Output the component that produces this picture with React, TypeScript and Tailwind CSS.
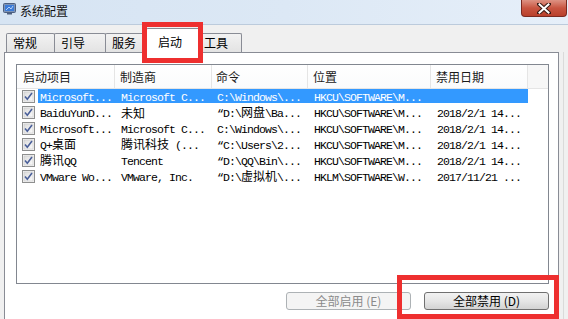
import React from "react";

const CJK = /[\u3000-\u9fff\uff00-\uffef]/;

function Mixed({ text }: { text: string }) {
  const parts = text.match(/[\u3000-\u9fff\uff00-\uffef]+|[^\u3000-\u9fff\uff00-\uffef]+/g) || [];
  return (
    <>
      {parts.map((p, i) =>
        CJK.test(p) ? (
          <span key={i} className="font-['Noto_Sans_CJK_SC',sans-serif] text-[12px] tracking-normal">
            {p}
          </span>
        ) : (
          <span key={i} className="font-['Liberation_Mono',monospace] text-[11.5px] tracking-[-0.9px] whitespace-pre">
            {p}
          </span>
        )
      )}
    </>
  );
}

function CheckBox() {
  return (
    <svg width="13" height="13" viewBox="0 0 13 13" className="shrink-0">
      <defs>
        <linearGradient id="cbg" x1="0" y1="0" x2="1" y2="1">
          <stop offset="0" stopColor="#dcdcdc" />
          <stop offset="1" stopColor="#fbfbfb" />
        </linearGradient>
      </defs>
      <rect x="0.5" y="0.5" width="12" height="12" fill="#f4f4f4" stroke="#8e8f8f" />
      <rect x="2" y="2" width="9" height="9" fill="url(#cbg)" stroke="#c8c8c8" strokeWidth="0.6" />
      <path d="M3 6.5 L5.3 9.2 L10 3" fill="none" stroke="#4a5f99" strokeWidth="1.6" />
    </svg>
  );
}

const rows = [
  ["Microsoft...", "Microsoft C...", "C:\\Windows\\...", "HKCU\\SOFTWARE\\M...", ""],
  ["BaiduYunD...", "未知", "“D:\\网盘\\Ba...", "HKCU\\SOFTWARE\\M...", "2018/2/1 14..."],
  ["Microsoft...", "Microsoft C...", "C:\\Windows\\...", "HKCU\\SOFTWARE\\M...", "2018/2/1 14..."],
  ["Q+桌面", "腾讯科技 (...", "“C:\\Users\\2...", "HKCU\\SOFTWARE\\M...", "2018/2/1 14..."],
  ["腾讯QQ", "Tencent", "“D:\\QQ\\Bin\\...", "HKCU\\SOFTWARE\\M...", "2018/2/1 14..."],
  ["VMware Wo...", "VMware, Inc.", "“D:\\虚拟机\\...", "HKLM\\SOFTWARE\\W...", "2017/11/21 ..."],
];

function Tab({ label, w, selected }: { label: string; w: string; selected?: boolean }) {
  if (selected) {
    return (
      <div
        className={`${w} h-[25px] -mb-px -ml-[2px] -mr-[2px] relative z-10 bg-white border border-b-0 border-[#898c95] rounded-t-[2px] flex items-start pt-[4px] pl-[11px] text-[12px] text-black`}
      >
        {label}
      </div>
    );
  }
  return (
    <div
      className={`${w} h-[19px] border border-b-0 border-[#898c95] -ml-px first:ml-0 rounded-t-[2px] bg-gradient-to-b from-[#f2f2f2] to-[#e3e3e3] flex items-center pl-[6px] text-[12px] text-black`}
    >
      {label}
    </div>
  );
}

export default function App() {
  return (
    <div className="w-[568px] h-[319px] overflow-hidden relative bg-[#f0f0f0] font-['Noto_Sans_CJK_SC',sans-serif]">
      {/* title bar */}
      <div className="h-[25px] flex items-start bg-gradient-to-r from-[#d6e4f3] via-[#dce8f5] to-[#e6eff9] border-b border-[#bccbdc]">
        <div className="pl-[3px] pt-[3px]">
          <svg width="13" height="12" viewBox="0 0 13 12">
            <rect x="0.5" y="0.5" width="12" height="9" rx="1" fill="#7d93b5" stroke="#4c5f80" />
            <rect x="2" y="2" width="9" height="6" fill="#3b7bd8" />
            <path d="M3 7 L6 4 L8 6 L10 3" stroke="#cfe4ff" strokeWidth="0.8" fill="none" />
            <rect x="4" y="10" width="5" height="1.5" fill="#4c5f80" />
          </svg>
        </div>
        <div className="ml-[4px] mt-[3px] text-[12px] leading-[16px] text-[#111]">系统配置</div>
        <div className="ml-auto mr-[1px] w-[46px] h-[17px] rounded-b-[4px] border border-t-0 border-[#7a2a20] bg-gradient-to-b from-[#dd9283] via-[#c85541] to-[#b9402b] flex items-center justify-center">
          <svg width="14" height="11" viewBox="0 0 14 11">
            <path d="M2 1 L12 10 M12 1 L2 10" stroke="#3a1a14" strokeWidth="4" strokeLinecap="square" />
            <path d="M2.5 1.5 L11.5 9.5 M11.5 1.5 L2.5 9.5" stroke="#ffffff" strokeWidth="2" strokeLinecap="square" />
          </svg>
        </div>
      </div>

      {/* tabs */}
      <div className="h-[27px] flex items-end pl-[6px]">
        <Tab label="常规" w="w-[49px]" />
        <Tab label="引导" w="w-[52px]" />
        <Tab label="服务" w="w-[43px]" />
        <Tab label="启动" w="w-[54px]" selected />
        <Tab label="工具" w="w-[45px]" />
      </div>

      {/* panel + right frame */}
      <div className="flex">
        <div className="ml-[4px] w-[555px] h-[268px] border border-[#898c95] bg-white flex flex-col">
          {/* list view */}
          <div className="mt-[11px] ml-[11px] w-[533px] h-[220px] border border-[#828790] bg-white flex flex-col">
            <div className="h-[24px] flex border-b border-[#e5e5e5] text-[12px] text-[#1a1a1a] bg-gradient-to-b from-white to-[#fafbfc]">
              <div className="w-[98px] border-r border-[#e5e5e5] pl-[6px] flex items-center">启动项目</div>
              <div className="w-[97px] border-r border-[#e5e5e5] pl-[5px] flex items-center">制造商</div>
              <div className="w-[96px] border-r border-[#e5e5e5] pl-[4px] flex items-center">命令</div>
              <div className="w-[123px] border-r border-[#e5e5e5] pl-[5px] flex items-center">位置</div>
              <div className="w-[97px] border-r border-[#e5e5e5] pl-[5px] flex items-center">禁用日期</div>
              <div className="flex-1 bg-[#f7f7f7]" />
            </div>
            {rows.map((r, i) => {
              const sel = i === 0;
              return (
                <div key={i} className="h-[16px] flex items-start">
                  <div className="w-[21px] pl-[5px] pt-[1px] flex">
                    <CheckBox />
                  </div>
                  <div
                    className={`h-[14px] flex items-center leading-[14px] ${
                      sel ? "bg-[#3399ff] text-white" : "text-black"
                    }`}
                  >
                    <div className="w-[78px] pl-[2px] overflow-hidden whitespace-nowrap">
                      <Mixed text={r[0]} />
                    </div>
                    <div className="w-[97px] pl-[5px] overflow-hidden whitespace-nowrap">
                      <Mixed text={r[1]} />
                    </div>
                    <div className="w-[96px] pl-[4px] overflow-hidden whitespace-nowrap">
                      <Mixed text={r[2]} />
                    </div>
                    <div className="w-[123px] pl-[5px] overflow-hidden whitespace-nowrap">
                      <Mixed text={r[3]} />
                    </div>
                    <div className="w-[96px] pl-[5px] overflow-hidden whitespace-nowrap">
                      <Mixed text={r[4]} />
                    </div>
                  </div>
                </div>
              );
            })}
          </div>

          {/* buttons */}
          <div className="mt-[8px] flex justify-end gap-[13px] pr-[9px]">
            <div className="w-[125px] h-[18px] rounded-[3px] border border-[#adb2b5] bg-[#f4f4f4] flex items-center justify-center text-[12px] text-[#8a8a8a]">
              全部启用 (E)
            </div>
            <div className="w-[125px] h-[18px] rounded-[3px] border border-[#707070] bg-gradient-to-b from-[#f2f2f2] via-[#e6e6e6] to-[#d3d3d3] flex items-center justify-center text-[12px] text-black">
              全部禁用 (D)
            </div>
          </div>
        </div>
        <div className="w-[4px]" />
        <div className="w-px h-[268px] bg-[#dadada]" />
      </div>

      {/* red annotation boxes */}
      <div className="absolute left-[142px] top-[22px] w-[61px] h-[41px] border-[5px] border-[#ee2f2f] z-20" />
      <div className="absolute left-[397px] top-[275px] w-[162px] h-[44px] border-[5px] border-[#ee2f2f] z-20" />
    </div>
  );
}
